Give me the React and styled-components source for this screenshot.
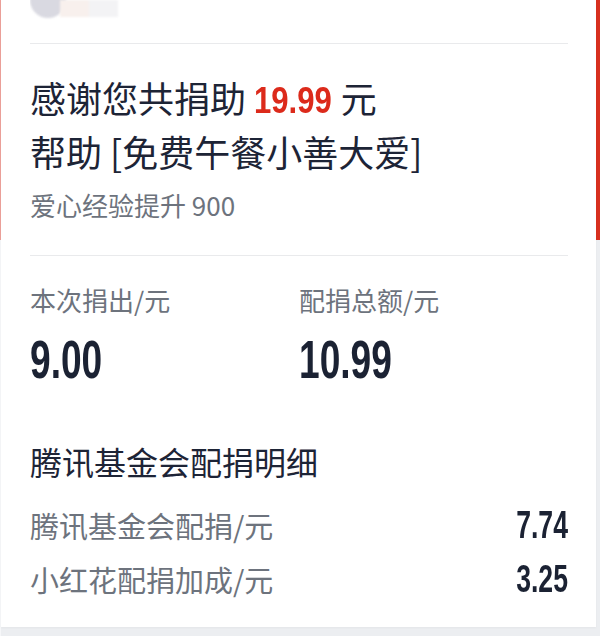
import React from "react";
import styled, { createGlobalStyle } from "styled-components";

const Global = createGlobalStyle`
  html, body { margin: 0; padding: 0; }
  body {
    width: 600px;
    height: 636px;
    overflow: hidden;
    font-family: "Noto Sans CJK SC", "Noto Sans", sans-serif;
  }
`;

const Page = styled.div`
  width: 600px;
  height: 636px;
  box-sizing: border-box;
  padding: 0 4px 9px 1px;
  background: linear-gradient(to bottom, #d8301f 0, #d8301f 240px, #eceef1 240px);
  box-shadow: inset 1px 0 rgba(255, 255, 255, 0.55);
`;

const Card = styled.div`
  background: #ffffff;
  padding: 0 28px 21px 29px;
  box-shadow: 0 1px 2px rgba(0, 0, 0, 0.04);
`;

const Header = styled.div`
  height: 43px;
  display: flex;
  align-items: flex-start;
  border-bottom: 1px solid #e9eaec;
  overflow: hidden;
`;

const Avatar = styled.div`
  width: 36px;
  height: 36px;
  margin-top: -18px;
  border-radius: 50%;
  background: #d9d9e1;
  filter: blur(1.2px);
`;

const NameBlur = styled.div`
  width: 58px;
  height: 17px;
  margin-left: -6px;
  background: linear-gradient(90deg, #f8f0ed 0, #f8f0ed 50%, #f3f3f5 50%);
  filter: blur(1px);
`;

const Thanks = styled.div`
  padding: 26px 0 33px;
`;

const ThanksLine = styled.div`
  font-size: 36px;
  line-height: 54px;
  color: #1d2436;
  white-space: nowrap;
`;

const Num = styled.span`
  display: inline-block;
  font-family: "Liberation Sans", Roboto, Arial, sans-serif;
  font-weight: 700;
  font-size: ${(p) => p.$size}px;
  line-height: 1;
  color: ${(p) => p.$color || "#1b2233"};
  transform: scaleX(${(p) => p.$sx});
  transform-origin: ${(p) => p.$origin || "left"} center;
  margin-right: ${(p) => p.$mr || 0};
`;

const Exp = styled.div`
  margin-top: 10px;
  font-size: 26px;
  line-height: 34px;
  color: #6d737d;
`;

const Stats = styled.div`
  border-top: 1px solid #e9eaec;
  padding-top: 26px;
  display: grid;
  grid-template-columns: 1fr 1fr;
`;

const Stat = styled.div`
  display: flex;
  flex-direction: column;
  align-items: flex-start;
`;

const Label = styled.div`
  font-size: ${(p) => p.$size || 26}px;
  line-height: ${(p) => p.$lh || 36}px;
  color: #6d737d;
  white-space: nowrap;
`;

const BigValue = styled.div`
  margin-top: 15px;
  height: 53px;
`;

const DetailTitle = styled.div`
  margin-top: 53px;
  font-size: 32px;
  line-height: 44px;
  color: #1d2436;
`;

const Rows = styled.div`
  margin-top: 15px;
  display: flex;
  flex-direction: column;
`;

const Row = styled.div`
  height: 54px;
  display: flex;
  align-items: center;
  justify-content: space-between;
`;

export default function App() {
  return (
    <>
      <Global />
      <Page>
        <Card>
          <Header>
            <Avatar />
            <NameBlur />
          </Header>
          <Thanks>
            <ThanksLine>
              感谢您共捐助{" "}
              <Num $size={37} $sx={0.84} $mr="-0.38em" $color="#dc2a1b">
                19.99
              </Num>{" "}
              元
            </ThanksLine>
            <ThanksLine>帮助 [免费午餐小善大爱]</ThanksLine>
            <Exp>爱心经验提升 900</Exp>
          </Thanks>
          <Stats>
            <Stat>
              <Label>本次捐出/元</Label>
              <BigValue>
                <Num $size={53} $sx={0.7}>9.00</Num>
              </BigValue>
            </Stat>
            <Stat>
              <Label>配捐总额/元</Label>
              <BigValue>
                <Num $size={53} $sx={0.7}>10.99</Num>
              </BigValue>
            </Stat>
          </Stats>
          <DetailTitle>腾讯基金会配捐明细</DetailTitle>
          <Rows>
            <Row>
              <Label $size={29} $lh={54}>腾讯基金会配捐/元</Label>
              <Num $size={38} $sx={0.7} $origin="right">7.74</Num>
            </Row>
            <Row>
              <Label $size={29} $lh={54}>小红花配捐加成/元</Label>
              <Num $size={38} $sx={0.7} $origin="right">3.25</Num>
            </Row>
          </Rows>
        </Card>
      </Page>
    </>
  );
}
